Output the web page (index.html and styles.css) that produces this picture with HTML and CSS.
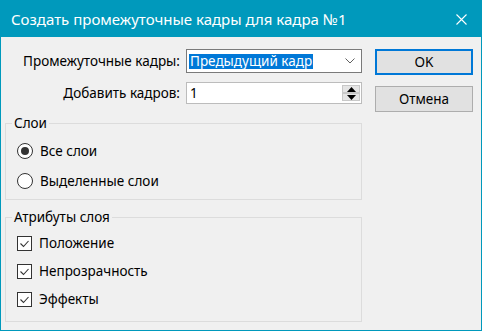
FILE: index.html
```html
<!DOCTYPE html>
<html lang="ru">
<head>
  <meta charset="UTF-8" />
  <title>Создать промежуточные кадры</title>
  <link rel="stylesheet" href="styles.css">
</head>
<body>
  <div class="window">
    <div class="titlebar">
      <span class="title">Создать промежуточные кадры для кадра №1</span>
      <span class="close">
        <svg width="11" height="11" viewBox="0 0 11 11"><path d="M0.5 0.5L10.5 10.5M10.5 0.5L0.5 10.5" stroke="#fff" stroke-width="1.1" fill="none"/></svg>
      </span>
    </div>

    <div class="client">
      <div class="main">
        <div class="fields">
          <label class="field-label">Промежуточные кадры:</label>
          <div class="combo">
            <span class="combo-value">Предыдущий кадр</span>
            <svg class="chevron" width="10" height="6" viewBox="0 0 10 6"><path d="M0.5 0.5L5 5L9.5 0.5" stroke="#606060" fill="none"/></svg>
          </div>

          <label class="field-label">Добавить кадров:</label>
          <div class="spin">
            <span class="spin-value">1</span>
            <div class="spin-btns">
              <span class="spin-btn"><svg width="9" height="5" viewBox="0 0 9 5"><path d="M0 5L4.5 0L9 5Z" fill="#000"/></svg></span>
              <span class="spin-btn"><svg width="9" height="5" viewBox="0 0 9 5"><path d="M0 0L4.5 5L9 0Z" fill="#000"/></svg></span>
            </div>
          </div>
        </div>

        <fieldset class="group group-layers">
          <legend>Слои</legend>
          <div class="option">
            <span class="radio checked"></span>
            <span>Все слои</span>
          </div>
          <div class="option">
            <span class="radio"></span>
            <span>Выделенные слои</span>
          </div>
        </fieldset>

        <fieldset class="group group-attrs">
          <legend>Атрибуты слоя</legend>
          <div class="option check-row">
            <span class="check"><svg width="13" height="13" viewBox="0 0 13 13"><path d="M2.5 6.5L5.5 9.5L10.5 4" stroke="#333" stroke-width="1.1" fill="none"/></svg></span>
            <span>Положение</span>
          </div>
          <div class="option check-row">
            <span class="check"><svg width="13" height="13" viewBox="0 0 13 13"><path d="M2.5 6.5L5.5 9.5L10.5 4" stroke="#333" stroke-width="1.1" fill="none"/></svg></span>
            <span>Непрозрачность</span>
          </div>
          <div class="option check-row">
            <span class="check"><svg width="13" height="13" viewBox="0 0 13 13"><path d="M2.5 6.5L5.5 9.5L10.5 4" stroke="#333" stroke-width="1.1" fill="none"/></svg></span>
            <span>Эффекты</span>
          </div>
        </fieldset>
      </div>

      <div class="buttons">
        <button class="btn btn-default">OK</button>
        <button class="btn">Отмена</button>
      </div>
    </div>
  </div>
</body>
</html>
```

FILE: styles.css
```css
body {
  margin: 0;
  font-family: "Noto Sans", "Open Sans", sans-serif;
  font-size: 13.5px;
  color: #000;
  background: #f0f0f0;
}

.window {
  width: 482px;
  height: 331px;
  box-sizing: border-box;
  border: 1px solid #0099bc;
  background: #f0f0f0;
}

.titlebar {
  height: 36px;
  background: #0099bc;
  color: #fff;
  display: flex;
  align-items: center;
  justify-content: space-between;
  padding-left: 10px;
}

.title {
  font-size: 15px;
  line-height: 20px;
}

.close {
  width: 40px;
  height: 36px;
  display: flex;
  align-items: center;
  justify-content: center;
}

.client {
  display: flex;
  gap: 13px;
  padding: 12px 7px 0 4px;
}

.main {
  width: 357px;
}

/* form rows */
.fields {
  display: grid;
  grid-template-columns: 175px 176px;
  grid-template-rows: 24px 22px;
  column-gap: 6px;
  row-gap: 9px;
  align-items: center;
}

.field-label {
  text-align: right;
  line-height: 20px;
}

.combo {
  height: 24px;
  box-sizing: border-box;
  border: 1px solid #7a7a7a;
  background: #fff;
  display: flex;
  align-items: center;
  justify-content: space-between;
  padding: 0 6px 0 2px;
}

.combo-value {
  background: #0078d7;
  color: #fff;
  line-height: 15px;
  padding: 0 1px;
}

.spin {
  height: 22px;
  box-sizing: border-box;
  border: 1px solid #bcbcbc;
  background: #fff;
  display: flex;
  align-items: center;
  justify-content: space-between;
  padding: 0 1px 0 3px;
}

.spin-btns {
  display: flex;
  flex-direction: column;
  width: 18px;
}

.spin-btn {
  height: 8px;
  box-sizing: border-box;
  background: #e5e5e5;
  border: 1px solid #c8c8c8;
  display: flex;
  align-items: center;
  justify-content: center;
}

/* groups */
.group {
  margin: 9px 0 0;
  padding: 3px 0 3px 6px;
  border: 1px solid #dcdcdc;
  min-inline-size: 0;
}

.group legend {
  padding: 0 2px;
  line-height: 20px;
}

.group-attrs {
  margin-top: 7px;
  padding: 2px 0 8px 6px;
}

.option {
  display: flex;
  align-items: center;
  gap: 7px;
  height: 30px;
  padding-left: 5px;
}

.check-row {
  height: 28px;
}

.radio {
  width: 14px;
  height: 14px;
  border: 1px solid #333;
  border-radius: 50%;
  background: #fff;
  display: flex;
  align-items: center;
  justify-content: center;
}

.radio.checked::after {
  content: "";
  width: 8px;
  height: 8px;
  border-radius: 50%;
  background: #333;
}

.check {
  width: 13px;
  height: 13px;
  border: 1px solid #333;
  background: #fff;
  display: flex;
}

/* buttons */
.buttons {
  width: 98px;
  display: flex;
  flex-direction: column;
  gap: 11px;
}

.btn {
  height: 26px;
  margin: 0;
  font-family: inherit;
  font-size: 13.5px;
  color: #000;
  background: #e1e1e1;
  border: 1px solid #adadad;
  padding: 0;
}

.btn-default {
  border: 2px solid #0078d7;
}
```
